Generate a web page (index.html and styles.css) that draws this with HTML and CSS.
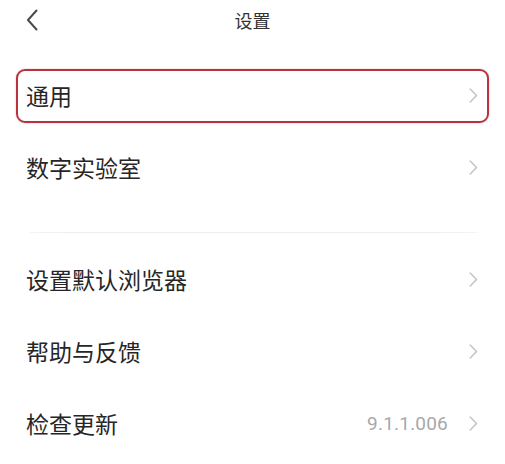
FILE: index.html
```html
<!DOCTYPE html>
<html lang="zh-CN">
<head>
<meta charset="utf-8">
<title>设置</title>
<link rel="stylesheet" href="styles.css">
</head>
<body>
<div class="page">
  <header class="topbar">
    <span class="back">
      <svg width="12" height="22" viewBox="0 0 12 22"><path d="M10.5 1.5 L2 11 L10.5 20.5" fill="none" stroke="#4a4a4a" stroke-width="2" stroke-linecap="round" stroke-linejoin="round"/></svg>
    </span>
    <h1 class="title">设置</h1>
  </header>

  <div class="group">
    <div class="row active">
      <span class="label">通用</span>
      <span class="right"><svg class="chev" width="9" height="15" viewBox="0 0 9 15"><path d="M1.2 1 L7.5 7.5 L1.2 14" fill="none" stroke="#c4c4c4" stroke-width="1.5" stroke-linecap="round" stroke-linejoin="round"/></svg></span>
    </div>
    <div class="row">
      <span class="label">数字实验室</span>
      <span class="right"><svg class="chev" width="9" height="15" viewBox="0 0 9 15"><path d="M1.2 1 L7.5 7.5 L1.2 14" fill="none" stroke="#c4c4c4" stroke-width="1.5" stroke-linecap="round" stroke-linejoin="round"/></svg></span>
    </div>
  </div>

  <div class="divider"></div>

  <div class="group">
    <div class="row">
      <span class="label">设置默认浏览器</span>
      <span class="right"><svg class="chev" width="9" height="15" viewBox="0 0 9 15"><path d="M1.2 1 L7.5 7.5 L1.2 14" fill="none" stroke="#c4c4c4" stroke-width="1.5" stroke-linecap="round" stroke-linejoin="round"/></svg></span>
    </div>
    <div class="row">
      <span class="label">帮助与反馈</span>
      <span class="right"><svg class="chev" width="9" height="15" viewBox="0 0 9 15"><path d="M1.2 1 L7.5 7.5 L1.2 14" fill="none" stroke="#c4c4c4" stroke-width="1.5" stroke-linecap="round" stroke-linejoin="round"/></svg></span>
    </div>
    <div class="row">
      <span class="label">检查更新</span>
      <span class="right"><span class="value">9.1.1.006</span><svg class="chev" width="9" height="15" viewBox="0 0 9 15"><path d="M1.2 1 L7.5 7.5 L1.2 14" fill="none" stroke="#c4c4c4" stroke-width="1.5" stroke-linecap="round" stroke-linejoin="round"/></svg></span>
    </div>
  </div>
</div>
</body>
</html>
```
FILE: styles.css
```css
* { box-sizing: border-box; }
html, body { margin: 0; padding: 0; background: #fff; }
body {
  font-family: "Noto Sans CJK SC", "Noto Sans", sans-serif;
  color: #262626;
  width: 505px;
  height: 464px;
  overflow: hidden;
}
.page { padding: 0 16px; }
.topbar {
  height: 40px;
  display: flex;
  align-items: center;
  justify-content: center;
  position: relative;
  margin-bottom: 29px;
}
.back {
  position: absolute;
  left: 10px;
  top: 9px;
  display: flex;
}
.title {
  margin: 0;
  font-size: 18px;
  font-weight: 400;
  color: #333;
  line-height: 1;
  padding-bottom: 1px;
}
.group {
  display: flex;
  flex-direction: column;
  gap: 18px;
}
.row {
  height: 54px;
  display: flex;
  align-items: center;
  justify-content: space-between;
  padding: 0 9px 2px 8px;
  border: 2px solid transparent;
  border-radius: 9px;
}
.row.active {
  border-color: #b8333d;
  box-shadow: 0 0 2px rgba(184, 51, 61, 0.35);
}
.label {
  font-size: 23px;
  line-height: 1;
  color: #262626;
}
.right {
  display: flex;
  align-items: center;
  gap: 21px;
}
.value {
  font-family: "Roboto", "Noto Sans", sans-serif;
  font-size: 19px;
  color: #a8a8a8;
  line-height: 1;
  letter-spacing: 0.2px;
}
.chev { display: block; }
.divider {
  height: 1px;
  margin: 37px 12px 20px 14px;
  background: linear-gradient(to right, #f4f4f4, #eeeeee 10%, #eeeeee 90%, #f4f4f4);
}
```
